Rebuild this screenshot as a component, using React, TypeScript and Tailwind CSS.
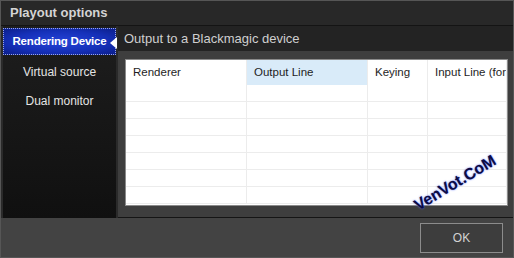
import React from "react";

const columns = [
  { id: "renderer", title: "Renderer", width: "w-[121px]" },
  { id: "output", title: "Output Line", width: "w-[121px]", active: true },
  { id: "keying", title: "Keying", width: "w-[60px]" },
  { id: "input", title: "Input Line (for", width: "flex-1" },
];

const rows = Array.from({ length: 7 }, (_, i) => i);

const menu = [
  { id: "rendering", label: "Rendering Device", selected: true },
  { id: "virtual", label: "Virtual source" },
  { id: "dual", label: "Dual monitor" },
];

export default function App() {
  return (
    <div className="relative flex h-[258px] w-[514px] flex-col overflow-hidden border border-[#565656] bg-[#2a2a2a] font-['Liberation_Sans',Arial,sans-serif]">
      {/* title bar */}
      <div className="flex h-[25px] shrink-0 items-center border-b border-[#141414] bg-[#282828] pl-[9px] text-[13px] font-bold text-[#d4d4d4]">
        Playout options
      </div>

      <div className="flex h-[192px] shrink-0 pl-[2px] pr-[2px]">
        {/* sidebar */}
        <div className="flex w-[113px] shrink-0 flex-col bg-gradient-to-b from-[#1e1e1e] to-[#101010] pt-[2px]">
          {menu.map((item) =>
            item.selected ? (
              <div
                key={item.id}
                className="relative mb-[2px] flex h-[27px] items-center justify-center border border-dotted border-[#9aa6e8] bg-[radial-gradient(ellipse_at_center,#2443d8_0%,#1530b8_60%,#0c1f8c_100%)] text-[11.5px] font-bold tracking-[-0.2px] text-white"
              >
                {item.label}
                <span className="absolute right-[-2px] top-[8px] h-0 w-0 border-y-[6px] border-r-[7px] border-y-transparent border-r-white" />
              </div>
            ) : (
              <div key={item.id} className="flex h-[29px] items-center justify-center text-[12px] text-[#e4e4e4]">
                {item.label}
              </div>
            ),
          )}
        </div>

        {/* content */}
        <div className="ml-[2px] flex flex-1 flex-col">
          <div className="flex h-[25px] shrink-0 items-center bg-[#232323] pl-[6px] text-[13px] text-[#cfcfcf]">
            Output to a Blackmagic device
          </div>
          <div className="flex-1 border-b border-[#151515] bg-[#3e3e3e] pl-[7px] pr-[8px] pt-[8px] pb-[10px]">
            <div className="flex h-[147px] flex-col overflow-hidden border border-[#8a8a8a] bg-white">
              <div className="flex h-[25px] shrink-0 text-[11.5px] text-[#1e1e1e]">
                {columns.map((col) => (
                  <div
                    key={col.id}
                    className={`${col.width} flex shrink-0 items-center overflow-hidden whitespace-nowrap border-r border-[#ececec] pl-[7px] ${
                      col.active ? "bg-[#d9ebf9]" : ""
                    }`}
                  >
                    {col.title}
                  </div>
                ))}
              </div>
              {rows.map((r) => (
                <div key={r} className="flex h-[17px] shrink-0 border-b border-[#ececec]">
                  {columns.map((col) => (
                    <div key={col.id} className={`${col.width} shrink-0 border-r border-[#ececec]`} />
                  ))}
                </div>
              ))}
            </div>
          </div>
        </div>
      </div>

      {/* footer */}
      <div className="flex flex-1 items-center justify-end bg-[#434343] pr-[10px]">
        <button
          type="button"
          className="h-[30px] w-[83px] border border-[#8c8c8c] bg-[#3d3d3d] text-[12px] text-[#d2d2d2]"
        >
          OK
        </button>
      </div>

      {/* watermark */}
      <div className="absolute left-[408px] top-[170px] rotate-[-31deg] text-[16px] font-bold text-[#0b0b45] [text-shadow:0_0_2px_#5a70ff]">
        VenVot.CoM
      </div>
    </div>
  );
}
